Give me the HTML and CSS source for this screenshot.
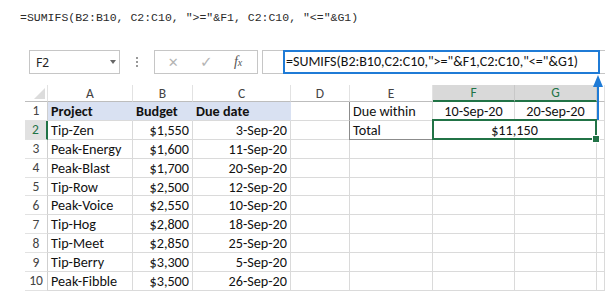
FILE: index.html
```html
<!DOCTYPE html>
<html lang="en">
<head>
    <meta charset="UTF-8">
    <meta name="viewport" content="width=device-width, initial-scale=1.0">
    <title>SUMIFS between dates</title>
    <link rel="stylesheet" href="styles.css">
</head>
<body>
    <p class="code">=SUMIFS(B2:B10, C2:C10, "&gt;="&amp;F1, C2:C10, "&lt;="&amp;G1)</p>

    <div class="toolbar">
        <div class="namebox">
            <span>F2</span>
            <span class="drop"></span>
        </div>
        <div class="dots"><i></i><i></i><i></i></div>
        <div class="buttons">
            <span class="btn-x">&#x2715;</span>
            <span class="btn-ok">&#x2713;</span>
            <span class="btn-fx"><i>f</i><small>x</small></span>
        </div>
        <div class="formula">
            <div class="formula-input">=SUMIFS(B2:B10,C2:C10,"&gt;="&amp;F1,C2:C10,"&lt;="&amp;G1)</div>
        </div>
    </div>

    <div class="sheet">
        <!-- encabezados -->
        <div class="hd corner"><span class="tri"></span></div>
        <div class="hd">A</div>
        <div class="hd">B</div>
        <div class="hd">C</div>
        <div class="hd">D</div>
        <div class="hd">E</div>
        <div class="hd hd-sel">F</div>
        <div class="hd hd-sel">G</div>
        <div class="hd"></div>

        <!-- fila 1 -->
        <div class="rh">1</div>
        <div class="c title">Project</div>
        <div class="c title">Budget</div>
        <div class="c title">Due date</div>
        <div class="c"></div>
        <div class="c box-top">Due within</div>
        <div class="c mid">10-Sep-20</div>
        <div class="c mid">20-Sep-20</div>
        <div class="c"></div>

        <!-- fila 2 -->
        <div class="rh rh-sel">2</div>
        <div class="c">Tip-Zen</div>
        <div class="c num">$1,550</div>
        <div class="c num">3-Sep-20</div>
        <div class="c"></div>
        <div class="c box-bot">Total</div>
        <div class="c mid merged sel">$11,150</div>
        <div class="c"></div>

        <div class="rh">3</div>
        <div class="c">Peak-Energy</div>
        <div class="c num">$1,600</div>
        <div class="c num">11-Sep-20</div>
        <div class="c"></div><div class="c"></div><div class="c"></div><div class="c"></div><div class="c"></div>

        <div class="rh">4</div>
        <div class="c">Peak-Blast</div>
        <div class="c num">$1,700</div>
        <div class="c num">20-Sep-20</div>
        <div class="c"></div><div class="c"></div><div class="c"></div><div class="c"></div><div class="c"></div>

        <div class="rh">5</div>
        <div class="c">Tip-Row</div>
        <div class="c num">$2,500</div>
        <div class="c num">12-Sep-20</div>
        <div class="c"></div><div class="c"></div><div class="c"></div><div class="c"></div><div class="c"></div>

        <div class="rh">6</div>
        <div class="c">Peak-Voice</div>
        <div class="c num">$2,550</div>
        <div class="c num">10-Sep-20</div>
        <div class="c"></div><div class="c"></div><div class="c"></div><div class="c"></div><div class="c"></div>

        <div class="rh">7</div>
        <div class="c">Tip-Hog</div>
        <div class="c num">$2,800</div>
        <div class="c num">18-Sep-20</div>
        <div class="c"></div><div class="c"></div><div class="c"></div><div class="c"></div><div class="c"></div>

        <div class="rh">8</div>
        <div class="c">Tip-Meet</div>
        <div class="c num">$2,850</div>
        <div class="c num">25-Sep-20</div>
        <div class="c"></div><div class="c"></div><div class="c"></div><div class="c"></div><div class="c"></div>

        <div class="rh">9</div>
        <div class="c">Tip-Berry</div>
        <div class="c num">$3,300</div>
        <div class="c num">5-Sep-20</div>
        <div class="c"></div><div class="c"></div><div class="c"></div><div class="c"></div><div class="c"></div>

        <div class="rh">10</div>
        <div class="c">Peak-Fibble</div>
        <div class="c num">$3,500</div>
        <div class="c num">26-Sep-20</div>
        <div class="c"></div><div class="c"></div><div class="c"></div><div class="c"></div><div class="c"></div>
    </div>

    <!-- flecha azul -->
    <svg class="arrow" width="12" height="46" viewBox="0 0 12 46">
        <line x1="6" y1="8" x2="6" y2="46" stroke="#1f7bd6" stroke-width="2"/>
        <polygon points="1,13 6,1 11,13" fill="#1f7bd6"/>
    </svg>
</body>
</html>
```

FILE: styles.css
```css
* {
    margin: 0;
    padding: 0;
    box-sizing: border-box;
}

body {
    background: #fff;
    color: #111;
    width: 605px;
    height: 294px;
    overflow: hidden;
    position: relative;
    font-family: Calibri, Carlito, Lato, sans-serif;
}

.code {
    font-family: "Liberation Mono", monospace;
    font-size: 11.5px;
    line-height: 14px;
    color: #2a2a2a;
    padding: 11px 0 0 20px;
}

/* barra de formulas */
.toolbar {
    display: flex;
    align-items: stretch;
    height: 24px;
    margin: 25px 0 0 29px;
}

.namebox {
    width: 91px;
    border: 1px solid #c6c6c6;
    display: flex;
    align-items: center;
    justify-content: space-between;
    padding: 0 3px 0 6px;
    font-family: "Noto Sans", sans-serif;
    font-size: 12px;
    color: #222;
}

.drop {
    width: 0;
    height: 0;
    border-left: 3.5px solid transparent;
    border-right: 3.5px solid transparent;
    border-top: 4px solid #666;
}

.dots {
    width: 34px;
    display: flex;
    flex-direction: column;
    align-items: center;
    justify-content: center;
    gap: 2px;
}

.dots i {
    width: 2px;
    height: 2px;
    background: #999;
}

.buttons {
    width: 104px;
    border: 1px solid #c6c6c6;
    display: flex;
    align-items: center;
    justify-content: space-around;
    padding: 0 4px 0 2px;
    color: #b4b4b4;
    font-family: "DejaVu Sans", sans-serif;
}

.btn-x { font-size: 13px; }
.btn-ok { font-size: 15px; }

.btn-fx {
    color: #555;
    font-family: "Liberation Serif", serif;
    font-size: 14px;
}

.btn-fx small { font-size: 10px; font-style: italic; }

.formula {
    flex: 1;
    margin: 0 -4px 0 4px;
    border: 1px solid #c6c6c6;
    display: flex;
}

.formula-input {
    flex: 1;
    margin: -1px 8px -1px 20px;
    border: 2px solid #1f7bd6;
    font-size: 14px;
    line-height: 19px;
    padding-left: 1px;
    color: #111;
    white-space: nowrap;
}

/* hoja */
.sheet {
    margin: 11px 0 0 25px;
    display: grid;
    grid-template-columns: 23px 85px 60px 98px 59px 83px 82px 82px 1fr;
    grid-template-rows: 17px repeat(10, 18.9px);
    font-size: 14.2px;
}

.hd {
    border-right: 1px solid #e2e2e2;
    border-bottom: 1px solid #bdbdbd;
    display: flex;
    align-items: center;
    justify-content: center;
    color: #444;
    font-size: 13.5px;
}

.corner {
    justify-content: flex-end;
    align-items: flex-end;
    padding: 0 2px 2px 0;
}

.tri {
    width: 11px;
    height: 11px;
    background: #dcdcdc;
    clip-path: polygon(100% 0, 100% 100%, 0 100%);
}

.hd-sel {
    background: #d9d9d9;
    color: #217346;
    border-right-color: #c8c8c8;
    border-bottom: 2px solid #217346;
}

.rh {
    border-right: 1px solid #cfcfcf;
    border-bottom: 1px solid #e2e2e2;
    display: flex;
    align-items: center;
    justify-content: center;
    color: #444;
    font-size: 13.5px;
}

.rh-sel {
    background: #e1e1e1;
    color: #217346;
    border-right: 2px solid #217346;
}

.c {
    border-right: 1px solid #dadada;
    border-bottom: 1px solid #dadada;
    display: flex;
    align-items: center;
    padding: 0 3px;
    white-space: nowrap;
}

.title {
    background: #d9e1f2;
    border-right-color: #d9e1f2;
    font-weight: bold;
}

.num { justify-content: flex-end; }
.mid { justify-content: center; }

.box-top {
    border-left: 1px solid #8c8c8c;
    margin-left: -1px;
}

.box-bot {
    border-left: 1px solid #8c8c8c;
    border-bottom-color: #8c8c8c;
    margin-left: -1px;
}

.merged { grid-column: span 2; }

.sel { position: relative; }

.sel::after {
    content: "";
    position: absolute;
    top: -2px;
    left: -1px;
    right: -1px;
    bottom: -1px;
    border: 2px solid #217346;
}

.sel::before {
    content: "";
    position: absolute;
    right: -4px;
    bottom: -4px;
    width: 6px;
    height: 6px;
    background: #217346;
    border: 1px solid #fff;
    z-index: 1;
}

.arrow {
    position: absolute;
    left: 592px;
    top: 74px;
}
```
